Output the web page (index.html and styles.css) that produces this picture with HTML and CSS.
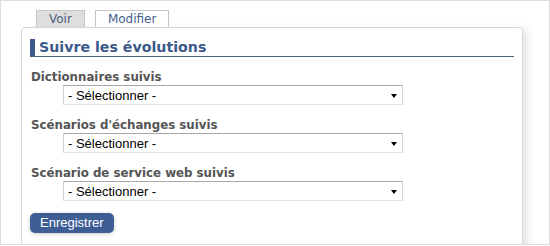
FILE: index.html
```html
<!DOCTYPE html>
<html lang="fr">
<head>
<meta charset="utf-8">
<title>Suivre les évolutions</title>
<link rel="stylesheet" href="styles.css">
</head>
<body>
<div class="frame">
  <div class="tabs">
    <span class="tab tab-off">Voir</span>
    <span class="tab tab-on">Modifier</span>
  </div>
  <div class="panel">
    <h2 class="title">Suivre les évolutions</h2>
    <div class="field">
      <label class="label">Dictionnaires suivis</label>
      <span class="select-wrap"><select class="select"><option>- Sélectionner -</option></select></span>
    </div>
    <div class="field">
      <label class="label">Scénarios d'échanges suivis</label>
      <span class="select-wrap"><select class="select"><option>- Sélectionner -</option></select></span>
    </div>
    <div class="field">
      <label class="label">Scénario de service web suivis</label>
      <span class="select-wrap"><select class="select"><option>- Sélectionner -</option></select></span>
    </div>
    <button class="btn" type="button">Enregistrer</button>
  </div>
</div>
</body>
</html>
```
FILE: styles.css
```css
html, body {
  margin: 0;
  padding: 0;
  background: #fff;
}
.frame {
  box-sizing: border-box;
  width: 550px;
  height: 245px;
  border: 1px solid #dcdcdc;
  overflow: hidden;
  background: #fff;
}
.tabs {
  display: flex;
  gap: 10px;
  margin-top: 9px;
  padding-left: 35px;
}
.tab {
  display: block;
  font-family: "DejaVu Sans", Verdana, sans-serif;
  font-size: 12px;
  line-height: 15px;
  padding: 1px 12px 0 12px;
  border: 1px solid #c6c6c6;
  border-bottom: none;
}
.tab-off {
  background: #dedede;
  color: #4d5e7a;
}
.tab-on {
  background: #fff;
  color: #44608e;
}
.panel {
  box-sizing: border-box;
  margin-left: 20px;
  width: 502px;
  height: 240px;
  border: 1px solid #d6d6d6;
  border-bottom: none;
  border-radius: 5px 5px 0 0;
  background: #fff;
  box-shadow: 5px 2px 9px rgba(0, 0, 0, 0.1);
  padding: 11px 8px 0 8px;
}
.title {
  margin: 0;
  font-family: "DejaVu Sans", Verdana, sans-serif;
  font-weight: bold;
  font-size: 14.2px;
  line-height: 17px;
  color: #3b5a8b;
  border-left: 5px solid #3d5b8c;
  border-bottom: 1px solid #4e6480;
  padding-left: 4px;
  margin-right: 0;
  width: 475px;
}
.field {
  margin-top: 13px;
}
.label {
  display: block;
  font-family: "DejaVu Sans", Verdana, sans-serif;
  font-weight: bold;
  font-size: 11.8px;
  line-height: 15px;
  color: #555;
  padding-left: 1px;
}
.select-wrap {
  position: relative;
  display: block;
  margin-left: 33px;
  width: 340px;
}
.select-wrap::after {
  content: "";
  position: absolute;
  right: 6px;
  top: 9px;
  border-left: 3.5px solid transparent;
  border-right: 3.5px solid transparent;
  border-top: 4px solid #000;
  pointer-events: none;
}
.select {
  -webkit-appearance: none;
  appearance: none;
  box-sizing: border-box;
  display: block;
  width: 340px;
  height: 20px;
  margin: 0;
  padding: 0 0 0 4px;
  background: #fff;
  border: 1px solid #d4d4d4;
  border-top-color: #a9a9a9;
  border-bottom-color: #e2e2e2;
  border-radius: 1px;
  font-family: "Liberation Sans", Arial, sans-serif;
  font-size: 13px;
  color: #000;
}
.btn {
  display: block;
  margin-top: 12px;
  height: 20px;
  padding: 0 10px;
  border: none;
  border-radius: 5px;
  background: #3d5d95;
  color: #fff;
  font-family: "Liberation Sans", Arial, sans-serif;
  font-size: 13px;
  line-height: 20px;
  box-shadow: 0 1px 4px rgba(0, 0, 0, 0.2);
}
```
